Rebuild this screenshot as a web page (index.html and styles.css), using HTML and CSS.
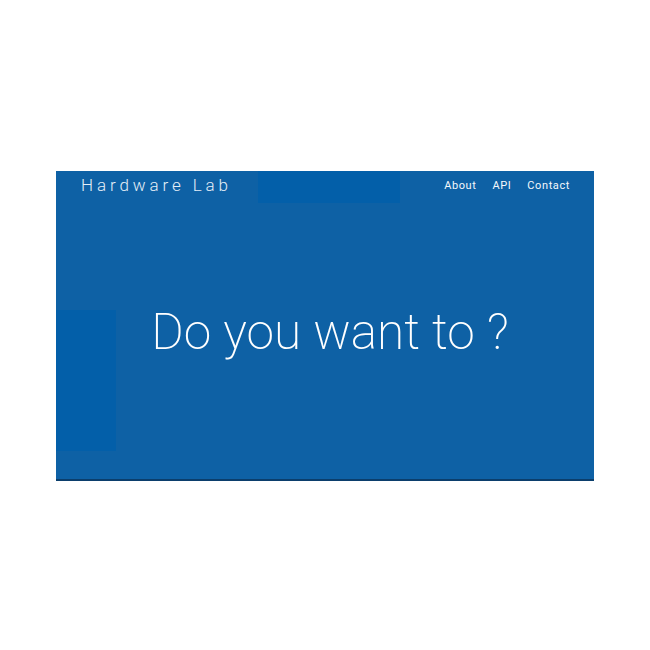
FILE: index.html
```html
<!DOCTYPE html>
<html>
<head>
<meta charset="utf-8">
<link rel="stylesheet" href="styles.css">
</head>
<body>
<div class="page">
  <section class="hero">
    <header class="topbar">
      <div class="brand">Hardware Lab</div>
      <div class="topbar-block"></div>
      <nav class="nav">
        <a href="#">About</a>
        <a href="#">API</a>
        <a href="#">Contact</a>
      </nav>
    </header>
    <div class="side-block"></div>
    <div class="hero-body">
      <h1 class="headline">Do you want to ?</h1>
    </div>
  </section>
</div>
</body>
</html>
```
FILE: styles.css
```css
html, body {
  margin: 0;
  padding: 0;
  background: #ffffff;
}
.page {
  padding: 171px 56px 0 56px;
}
.hero {
  position: relative;
  width: 538px;
  height: 308px;
  background: #0e61a5;
  border-bottom: 2px solid #0b3e6c;
  font-family: Roboto, "Liberation Sans", sans-serif;
  color: #ffffff;
  display: flex;
  flex-direction: column;
}
.topbar {
  display: flex;
  align-items: flex-start;
  height: 32px;
  padding: 0 24px 0 25px;
}
.brand {
  font-weight: 300;
  font-size: 17px;
  letter-spacing: 3.9px;
  line-height: 28px;
  color: #e4eef7;
  width: 177px;
}
.topbar-block {
  width: 142px;
  height: 32px;
  background: #035fa9;
}
.nav {
  margin-left: auto;
  display: flex;
  gap: 16px;
  line-height: 29px;
}
.nav a {
  color: #f4f8fc;
  text-decoration: none;
  font-size: 11px;
  font-weight: 400;
  letter-spacing: 0.6px;
}
.side-block {
  position: absolute;
  left: 0;
  top: 139px;
  width: 60px;
  height: 141px;
  background: #035fa9;
}
.hero-body {
  flex: 1;
  display: flex;
  justify-content: center;
  padding: 101px 0 0 10px;
  position: relative;
}
.headline {
  margin: 0;
  font-weight: 200;
  font-size: 49.6px;
  line-height: 56px;
  color: #ffffff;
  letter-spacing: 0;
}
```
